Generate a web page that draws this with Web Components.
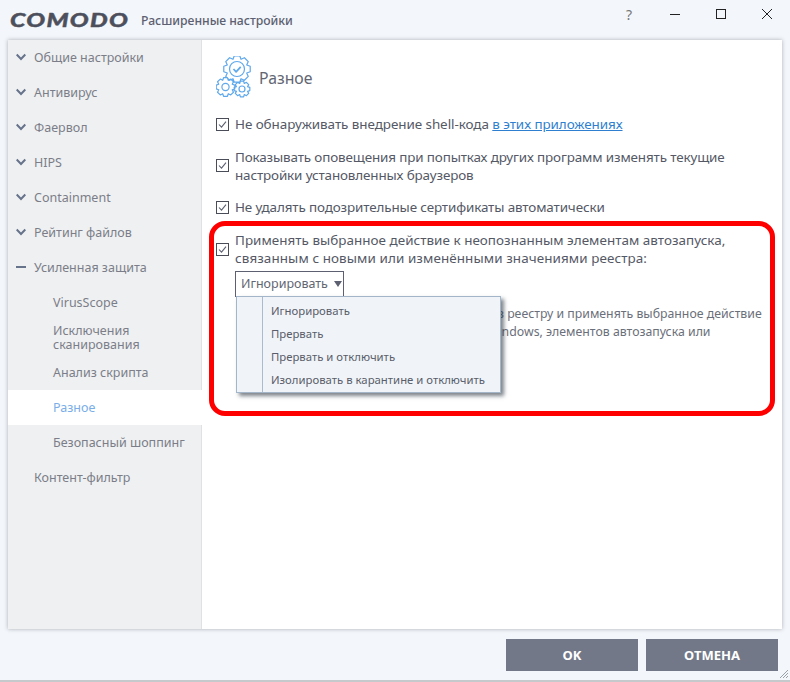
<!DOCTYPE html>
<html lang="ru">
<head>
<meta charset="utf-8">
<title>COMODO</title>
<style>
html, body { margin: 0; height: 100%; }
body { font-family: "Noto Sans", "Open Sans", sans-serif; background: #f3f6fa; overflow: hidden; }
</style>
</head>
<body>
<cmd-window>
  <cmd-titlebar slot="title" caption="Расширенные настройки"></cmd-titlebar>

  <cmd-nav slot="nav">
    <cmd-nav-item icon="chevron">Общие настройки</cmd-nav-item>
    <cmd-nav-item icon="chevron">Антивирус</cmd-nav-item>
    <cmd-nav-item icon="chevron">Фаервол</cmd-nav-item>
    <cmd-nav-item icon="chevron">HIPS</cmd-nav-item>
    <cmd-nav-item icon="chevron">Containment</cmd-nav-item>
    <cmd-nav-item icon="chevron">Рейтинг файлов</cmd-nav-item>
    <cmd-nav-item icon="dash">Усиленная защита</cmd-nav-item>
    <cmd-nav-item sub>VirusScope</cmd-nav-item>
    <cmd-nav-item sub>Исключения<br>сканирования</cmd-nav-item>
    <cmd-nav-item sub>Анализ скрипта</cmd-nav-item>
    <cmd-nav-item sub selected>Разное</cmd-nav-item>
    <cmd-nav-item sub>Безопасный шоппинг</cmd-nav-item>
    <cmd-nav-item>Контент-фильтр</cmd-nav-item>
  </cmd-nav>

  <cmd-page slot="page" heading="Разное">
    <cmd-check><span style="letter-spacing:-.06px">Не обнаруживать внедрение shell-кода <a href="#" style="color:#2f7fd0">в этих приложениях</a></span></cmd-check>
    <cmd-check><span style="letter-spacing:-.14px">Показывать оповещения при попытках других программ изменять текущие<br>настройки установленных браузеров</span></cmd-check>
    <cmd-check><span style="letter-spacing:-.13px">Не удалять подозрительные сертификаты автоматически</span></cmd-check>
    <cmd-check><span style="letter-spacing:.03px">Применять выбранное действие к неопознанным элементам автозапуска,</span><br><span style="letter-spacing:.09px">связанным с новыми или изменёнными значениями реестра:</span></cmd-check>
    <cmd-select value="Игнорировать">
      <cmd-menu-item>Игнорировать</cmd-menu-item>
      <cmd-menu-item>Прервать</cmd-menu-item>
      <cmd-menu-item>Прервать и отключить</cmd-menu-item>
      <cmd-menu-item>Изолировать в карантине и отключить</cmd-menu-item>
    </cmd-select>
    <cmd-behind>
      <div>в реестру и применять выбранное действие</div>
      <div style="margin-left:-10px">Windows, элементов автозапуска или</div>
    </cmd-behind>
  </cmd-page>

  <cmd-button slot="actions">OK</cmd-button>
  <cmd-button slot="actions">ОТМЕНА</cmd-button>
  <cmd-callout></cmd-callout>
</cmd-window>

<script>
// outline of a cog, teeth are drawn as a polar zigzag
function gearPath(cx, cy, outer, inner, teeth) {
  let pts = [];
  let step = Math.PI * 2 / teeth;
  for (let i = 0; i < teeth; i++) {
    let a = i * step;
    [[-0.5, inner], [-0.26, outer], [0.26, outer], [0.5, inner]].forEach(([k, r]) => {
      let t = a + k * step;
      pts.push((cx + r * Math.cos(t)).toFixed(2) + ' ' + (cy + r * Math.sin(t)).toFixed(2));
    });
  }
  return 'M' + pts.join('L') + 'Z';
}

function define(name, css, html) {
  customElements.define(name, class extends HTMLElement {
    constructor() {
      super();
      this._root = this.attachShadow({mode: 'open'});
    }
    connectedCallback() {
      this._root.innerHTML = `<style>${css}</style>` + (typeof html == 'function' ? html(this) : html);
    }
  });
}

define('cmd-window', `
  :host { display: flex; flex-direction: column; height: 682px; box-sizing: border-box; border-bottom: 2px solid #c6c9cc; position: relative; }
  .panel { display: flex; height: 589px; margin: 0 8px; background: #fff; box-shadow: 0 0 4px rgba(60,70,85,.4); }
  .actions { display: flex; justify-content: flex-end; gap: 8px; padding: 10px 12px 0 0; }
  .grip { position: absolute; right: 1px; bottom: 1px; }
`, `
  <slot name="title"></slot>
  <div class="panel"><slot name="nav"></slot><slot name="page"></slot></div>
  <div class="actions"><slot name="actions"></slot></div>
  <svg class="grip" width="10" height="10" viewBox="0 0 10 10" fill="none" stroke="#9aa0a8"><path d="M1 9L9 1M4 9L9 4M7 9L9 7"/></svg>
  <slot></slot>
`);

define('cmd-titlebar', `
  :host { display: flex; align-items: center; height: 40px; box-sizing: border-box; padding: 0 0 0 10px; }
  .logo { display: block; font: italic 900 19.5px/1 Lato, sans-serif; letter-spacing: 1px; color: #4d505c; width: 131px; flex: none; white-space: nowrap; transform-origin: left center; transform: scaleX(1.28); -webkit-text-stroke: .4px #4d505c; }
  .cap { font-size: 12.2px; font-weight: 500; color: #5c6070; }
  .ctl { margin-left: auto; display: flex; padding-bottom: 12px; }
  .ctl span { width: 46px; height: 28px; display: flex; align-items: center; justify-content: center; font-size: 14px; color: #777; }
`, el => `
  <span class="logo">COMODO</span>
  <span class="cap">${el.getAttribute('caption')}</span>
  <div class="ctl">
    <span>?</span>
    <span><svg width="10" height="10" fill="none" stroke="#222"><path d="M0 5.5H10"/></svg></span>
    <span><svg width="10" height="10" fill="none" stroke="#222"><rect x=".5" y=".5" width="9" height="9"/></svg></span>
    <span><svg width="10" height="10" fill="none" stroke="#222"><path d="M0 0L10 10M10 0L0 10"/></svg></span>
  </div>
`);

define('cmd-nav', `
  :host { display: block; width: 194px; flex: none; background: #eff0f2; border-right: 1px solid #dfe1e4; box-sizing: border-box; }
`, `<slot></slot>`);

define('cmd-nav-item', `
  :host { display: flex; align-items: center; height: 35px; box-sizing: border-box; padding: 0 0 0 26px; font-size: 12.5px; line-height: 14px; color: #7b7e88; position: relative; }
  :host([sub]) { padding-left: 45px; }
  :host([selected]) { background: #fff; color: #79aee8; margin-right: -1px; }
  svg { position: absolute; left: 8px; top: 12px; }
`, el => {
  let icon = el.getAttribute('icon');
  let svg = '';
  if (icon == 'chevron') svg = '<svg width="10" height="10" fill="none" stroke="#66738a" stroke-width="2"><path d="M.7 2.5L5 7L9.3 2.5"/></svg>';
  if (icon == 'dash') svg = '<svg width="10" height="10" fill="none" stroke="#66738a" stroke-width="2"><path d="M0 5H10"/></svg>';
  return svg + '<span><slot></slot></span>';
});

define('cmd-page', `
  :host { display: flex; flex-direction: column; flex: 1; padding: 16px 0 0 14px; position: relative; }
  .head { display: flex; align-items: center; gap: 6px; height: 42px; margin-bottom: 17px; font-size: 15.8px; color: #626672; }
  .head svg { flex: none; }
  .head span { padding-top: 1px; }
  .list { display: flex; flex-direction: column; gap: 14.7px; }
`, el => {
  let gears = gearPath(21, 13, 13.5, 10.5, 8) + gearPath(9.5, 31, 9.5, 7.3, 8) + gearPath(26, 33, 8, 6, 8);
  return `
  <div class="head">
    <svg width="37" height="42" viewBox="0 0 37 42" fill="none" stroke="#5ea8ec" stroke-width="1.2" stroke-linejoin="round">
      <path d="${gears}"/>
      <circle cx="21" cy="13" r="7.5"/><circle cx="9.5" cy="31" r="3.6"/><circle cx="26" cy="33" r="3"/>
      <path d="M17.5 13l2.6 2.8l4.6-5" stroke-width="1.7"/>
    </svg>
    <span>${el.getAttribute('heading')}</span>
  </div>
  <div class="list"><slot></slot></div>`;
});

define('cmd-check', `
  :host { display: flex; align-items: center; gap: 6px; font-size: 13.45px; line-height: 18px; color: #555966; white-space: nowrap; }
  .box { width: 13px; height: 13px; flex: none; box-sizing: border-box; }
`, `
  <svg class="box" viewBox="0 0 13 13" fill="none"><rect x=".5" y=".5" width="12" height="12" stroke="#4a4d58"/><path d="M3 6.5l2.5 2.7L10 3.6" stroke="#5c6070" stroke-width="1.1"/></svg>
  <div><slot></slot></div>
`);

define('cmd-select', `
  :host { display: block; margin: -11px 0 0 19px; width: max-content; position: relative; z-index: 2; font-size: 12.5px; color: #626672; }
  .field { display: flex; align-items: center; gap: 6px; height: 26px; box-sizing: border-box; width: 109px; padding-left: 5px; border: 1px solid #5c6070; background: #fff; }
  .arrow { width: 0; height: 0; border-left: 4.5px solid transparent; border-right: 4.5px solid transparent; border-top: 6px solid #5c6070; }
  .menu { position: absolute; left: 1px; top: 25px; width: 265px; height: 97px; box-sizing: border-box; background: linear-gradient(to right, #f0f4f9 25px, #a9bbcd 25px, #a9bbcd 26px, #f0f4f9 26px); border: 1px solid #a3b6c9; box-shadow: 3px 3px 4px rgba(40,50,60,.6); padding-top: 2px; }
`, el => `
  <div class="field"><span>${el.getAttribute('value')}</span><span class="arrow"></span></div>
  <div class="menu"><slot></slot></div>
`);

define('cmd-menu-item', `
  :host { display: block; height: 23px; line-height: 23px; padding-left: 34px; font-size: 11.35px; color: #5a5e6a; white-space: nowrap; }
`, `<slot></slot>`);

define('cmd-behind', `
  :host { display: block; margin: -6px 0 0 281px; font-size: 12.3px; line-height: 18px; color: #6b6f7a; white-space: nowrap; }
`, `<slot></slot>`);

define('cmd-button', `
  :host { display: flex; align-items: center; justify-content: center; width: 132px; height: 32px; background: #727888; color: #fff; font-size: 13px; font-weight: 700; }
`, `<slot></slot>`);

// annotation drawn over the screenshot
define('cmd-callout', `
  :host { position: absolute; left: 209px; top: 221px; width: 566px; height: 195px; box-sizing: border-box; border: 5px solid #fe0000; border-radius: 16px; pointer-events: none; }
`, ``);
</script>
</body>
</html>
